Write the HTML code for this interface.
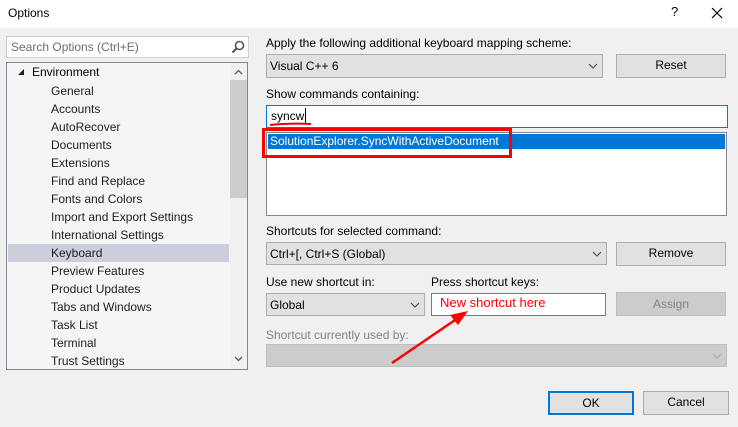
<!DOCTYPE html><html><head><style>
body{margin:0;width:738px;height:427px;background:#f0f0f0;font-family:"Liberation Sans",sans-serif;font-size:12px;color:#000;position:relative;overflow:hidden}
.a{position:absolute;box-sizing:border-box}
.t{position:absolute;white-space:nowrap}
.cb{background:#e1e1e1;border:1px solid #adadad}
.btn{background:#e1e1e1;border:1px solid #adadad;text-align:center;line-height:21px}
</style></head><body>
<div class="a" style="left:0;top:0;width:738px;height:28px;background:#fff"></div>
<div class="t" style="left:8px;top:6px;font-size:12px">Options</div>
<div class="t" style="left:671px;top:4px;font-size:13px">?</div>
<svg class="a" style="left:711px;top:7px" width="12" height="12"><path d="M1 1L11 11M11 1L1 11" stroke="#000" stroke-width="1.2"/></svg>

<div class="a" style="left:6px;top:36px;width:243px;height:22px;background:#fff;border:1px solid #ccced6"></div>
<div class="t" style="left:11px;top:40px;color:#6d6d6d">Search Options (Ctrl+E)</div>
<svg class="a" style="left:231px;top:40px" width="14" height="14"><circle cx="8.5" cy="5.5" r="4" fill="none" stroke="#555" stroke-width="1.6"/><path d="M6 8L1.5 12.5" stroke="#555" stroke-width="2.2"/></svg>

<div class="a" style="left:6px;top:62px;width:242px;height:308px;background:#f5f5f5;border:1px solid #828790"></div>
<div class="a" style="left:230px;top:63px;width:17px;height:306px;background:#f0f0f0"></div>
<div class="a" style="left:230px;top:80px;width:17px;height:118px;background:#cdcdcd"></div>
<svg class="a" style="left:234px;top:69px" width="9" height="6"><path d="M1 5L4.5 1.5L8 5" fill="none" stroke="#606060" stroke-width="1.3"/></svg>
<svg class="a" style="left:234px;top:356px" width="9" height="6"><path d="M1 1L4.5 4.5L8 1" fill="none" stroke="#606060" stroke-width="1.3"/></svg>
<div class="a" style="left:8px;top:244px;width:221px;height:18px;background:#cccedb"></div>
<svg class="a" style="left:17px;top:68px" width="8" height="8"><path d="M7 1V7H1Z" fill="#1e1e1e"/></svg>
<div class="t" style="left:32px;top:65px">Environment</div>
<div style="position:absolute;left:51px;top:82px;line-height:18px;color:#1e1e1e">General<br>Accounts<br>AutoRecover<br>Documents<br>Extensions<br>Find and Replace<br>Fonts and Colors<br>Import and Export Settings<br>International Settings<br>Keyboard<br>Preview Features<br>Product Updates<br>Tabs and Windows<br>Task List<br>Terminal<br>Trust Settings</div>

<div class="t" style="left:266px;top:36px">Apply the following additional keyboard mapping scheme:</div>
<div class="a cb" style="left:266px;top:54px;width:337px;height:24px"></div>
<div class="t" style="left:270px;top:59px">Visual C++ 6</div>
<svg class="a" style="left:588px;top:63px" width="10" height="6"><path d="M1 1L5 5L9 1" fill="none" stroke="#444"/></svg>
<div class="a btn" style="left:616px;top:54px;width:110px;height:24px">Reset</div>

<div class="t" style="left:266px;top:87px">Show commands containing:</div>
<div class="a" style="left:266px;top:105px;width:462px;height:23px;background:#fff;border:1px solid #0078d7"></div>
<div class="t" style="left:271px;top:109px">syncw</div>
<div class="a" style="left:305px;top:108px;width:1px;height:16px;background:#000"></div>
<svg class="a" style="left:268px;top:121px" width="46" height="6"><path d="M2 4Q20 2 43 3" stroke="#e00" stroke-width="2" fill="none"/></svg>
<div class="a" style="left:266px;top:132px;width:461px;height:84px;background:#fff;border:1px solid #828790"></div>
<div class="a" style="left:268px;top:134px;width:457px;height:15px;background:#0078d7"></div>
<div class="t" style="left:270px;top:134px;color:#fff">SolutionExplorer.SyncWithActiveDocument</div>
<div class="a" style="left:262px;top:128px;width:250px;height:30px;border:3px solid #f00"></div>

<div class="t" style="left:266px;top:224px">Shortcuts for selected command:</div>
<div class="a cb" style="left:266px;top:242px;width:341px;height:23px"></div>
<div class="t" style="left:270px;top:247px">Ctrl+[, Ctrl+S (Global)</div>
<svg class="a" style="left:592px;top:251px" width="10" height="6"><path d="M1 1L5 5L9 1" fill="none" stroke="#444"/></svg>
<div class="a btn" style="left:616px;top:242px;width:110px;height:24px">Remove</div>

<div class="t" style="left:266px;top:275px">Use new shortcut in:</div>
<div class="a cb" style="left:266px;top:293px;width:159px;height:23px"></div>
<div class="t" style="left:270px;top:298px">Global</div>
<svg class="a" style="left:410px;top:302px" width="10" height="6"><path d="M1 1L5 5L9 1" fill="none" stroke="#444"/></svg>
<div class="t" style="left:431px;top:275px">Press shortcut keys:</div>
<div class="a" style="left:431px;top:293px;width:175px;height:23px;background:#fff;border:1px solid #7a7a7a"></div>
<div class="t" style="left:440px;top:295px;color:#f00;font-size:13px">New shortcut here</div>
<div class="a" style="left:616px;top:292px;width:110px;height:24px;background:#ccc;border:1px solid #bfbfbf;text-align:center;line-height:22px;color:#838383">Assign</div>

<div class="t" style="left:266px;top:328px;color:#838383">Shortcut currently used by:</div>
<div class="a" style="left:266px;top:344px;width:461px;height:23px;background:#ccc;border:1px solid #bfbfbf"></div>
<svg class="a" style="left:712px;top:353px" width="10" height="6"><path d="M1 1L5 5L9 1" fill="none" stroke="#aaa"/></svg>
<svg class="a" style="left:380px;top:300px" width="100" height="70"><path d="M12 63L78 18" stroke="#f00" stroke-width="2.5"/><path d="M88 11L70 15L78 25Z" fill="#f00"/></svg>

<div class="a" style="left:548px;top:391px;width:86px;height:24px;background:#e1e1e1;border:2px solid #0078d7;text-align:center;line-height:20px">OK</div>
<div class="a btn" style="left:643px;top:391px;width:86px;height:24px">Cancel</div>
</body></html>
